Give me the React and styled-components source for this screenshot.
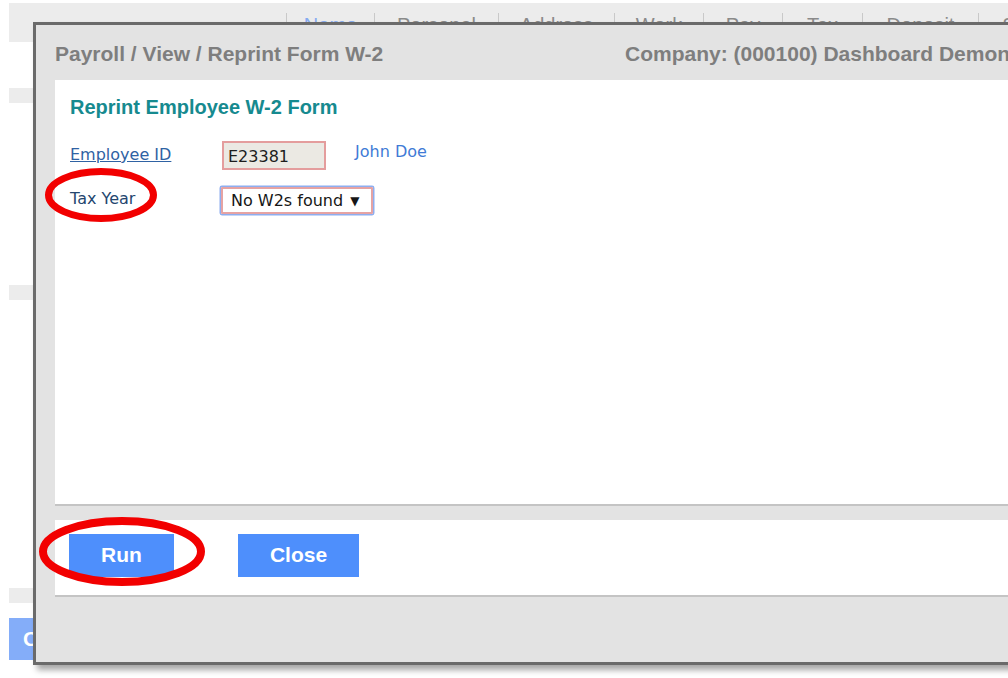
import React from "react";
import styled, { createGlobalStyle } from "styled-components";

const GlobalStyle = createGlobalStyle`
  html, body {
    margin: 0;
    padding: 0;
    background: #fff;
  }
  body {
    overflow: hidden;
    font-family: "Liberation Sans", Arial, sans-serif;
  }
`;

const tabs = [
  { label: "Name", width: 88, active: true },
  { label: "Personal", width: 124 },
  { label: "Address", width: 116 },
  { label: "Work", width: 89 },
  { label: "Pay", width: 79 },
  { label: "Tax", width: 80 },
  { label: "Deposit", width: 116 },
  { label: "Settings", width: 120 },
];

const App = () => {
  return (
    <>
      <GlobalStyle />
      <Screen>
        <Backdrop>
          <TabBar>
            {tabs.map((tab) => (
              <Tab key={tab.label} $w={tab.width} $active={tab.active}>
                {tab.label}
              </Tab>
            ))}
          </TabBar>
          <SideStrip $top={46} />
          <SideStrip $top={182} />
          <SideStrip $top={288} />
          <PageButton>Cancel</PageButton>
        </Backdrop>

        <Modal>
          <TitleBar>
            <Crumbs>Payroll / View / Reprint Form W-2</Crumbs>
            <Crumbs>Company: (000100) Dashboard Demonstration</Crumbs>
          </TitleBar>

          <Panel>
            <Heading>Reprint Employee W-2 Form</Heading>
            <FieldRow>
              <FieldLabel as="a" href="#" $pad={5} $link>
                Employee ID
              </FieldLabel>
              <TextBox>E23381</TextBox>
              <EmployeeName>John Doe</EmployeeName>
            </FieldRow>
            <FieldRow $gap={17}>
              <FieldLabel $pad={3}>Tax Year</FieldLabel>
              <SelectBox>
                No W2s found
                <Caret>▼</Caret>
              </SelectBox>
            </FieldRow>
          </Panel>

          <Footer>
            <ActionButton $w={105}>Run</ActionButton>
            <ActionButton $w={121}>Close</ActionButton>
          </Footer>
        </Modal>

        <Marks viewBox="0 0 1008 678">
          <ellipse cx="101" cy="195" rx="52.5" ry="23.5" />
          <ellipse cx="122" cy="551.5" rx="79" ry="30.5" strokeWidth="8" />
        </Marks>
      </Screen>
    </>
  );
};

export default App;

const Screen = styled.div`
  position: relative;
  width: 1008px;
  height: 678px;
  overflow: hidden;
  background: #fff;
`;

const Backdrop = styled.div`
  padding: 3px 0 0 9px;
`;

const TabBar = styled.div`
  height: 39px;
  background: #ececec;
  display: flex;
  padding-left: 277px;
`;

const Tab = styled.div`
  flex: none;
  box-sizing: border-box;
  width: ${(p) => p.$w}px;
  height: 26px;
  margin-top: 10px;
  border-left: 1px solid #c9c9c9;
  text-align: center;
  font-size: 20px;
  line-height: 24px;
  color: ${(p) => (p.$active ? "#86abf0" : "#8a8a8a")};
`;

const SideStrip = styled.div`
  width: 40px;
  height: 15px;
  margin-top: ${(p) => p.$top}px;
  background: #ececec;
`;

const PageButton = styled.div`
  width: 80px;
  height: 42px;
  margin-top: 15px;
  box-sizing: border-box;
  padding-left: 14px;
  background: #84adf9;
  color: #fff;
  font-size: 21px;
  font-weight: bold;
  line-height: 42px;
`;

const Modal = styled.div`
  position: absolute;
  left: 33px;
  top: 22px;
  width: 1060px;
  height: 643px;
  box-sizing: border-box;
  border: 3px solid #6a6a6a;
  background: #e3e3e3;
  box-shadow: 4px 5px 6px rgba(0, 0, 0, 0.35);
  padding-left: 19px;
  display: flex;
  flex-direction: column;
`;

const TitleBar = styled.div`
  height: 55px;
  box-sizing: border-box;
  padding-top: 17px;
  display: grid;
  grid-template-columns: 570px 1fr;
`;

const Crumbs = styled.div`
  font-size: 21px;
  font-weight: bold;
  line-height: 24px;
  color: #7e7e7e;
  white-space: nowrap;
`;

const Panel = styled.div`
  height: 426px;
  box-sizing: border-box;
  padding: 15px 0 0 15px;
  background: #fff;
  border-bottom: 2px solid #c4c4c4;
`;

const Heading = styled.div`
  font-size: 20px;
  font-weight: bold;
  line-height: 24px;
  color: #168a8f;
  margin-bottom: 22px;
`;

const FieldRow = styled.div`
  display: flex;
  align-items: flex-start;
  margin-top: ${(p) => p.$gap || 0}px;
  font-family: "DejaVu Sans", Verdana, sans-serif;
  font-size: 16px;
  line-height: 18px;
`;

const FieldLabel = styled.div`
  width: 152px;
  flex: none;
  padding-top: ${(p) => p.$pad}px;
  color: ${(p) => (p.$link ? "#2f62a3" : "#24466f")};
  text-decoration: ${(p) => (p.$link ? "underline" : "none")};
`;

const TextBox = styled.div`
  width: 104px;
  height: 29px;
  box-sizing: border-box;
  padding: 5px 4px 0;
  border: 2px solid #e49d9d;
  background: #ebe9e3;
  color: #1d1d1d;
`;

const EmployeeName = styled.div`
  margin-left: 29px;
  padding-top: 2px;
  color: #3f7bd6;
`;

const SelectBox = styled.div`
  display: flex;
  align-items: center;
  height: 27px;
  box-sizing: border-box;
  padding: 3px 12px 2px 8px;
  margin-left: -1px;
  border: 2px solid #e6a3a3;
  box-shadow: 0 0 0 1.5px #8eaef0;
  border-radius: 1px;
  color: #161616;
  white-space: nowrap;
`;

const Caret = styled.span`
  margin-left: 7px;
  font-size: 12px;
`;

const Footer = styled.div`
  margin-top: 14px;
  height: 77px;
  box-sizing: border-box;
  padding: 14px 0 0 14px;
  display: flex;
  align-items: flex-start;
  gap: 64px;
  background: #fff;
  border-bottom: 2px solid #c4c4c4;
`;

const ActionButton = styled.button`
  width: ${(p) => p.$w}px;
  height: 43px;
  border: none;
  padding: 0 0 2px;
  background: #4e8ffc;
  color: #fff;
  font-family: "Liberation Sans", Arial, sans-serif;
  font-size: 21px;
  font-weight: bold;
`;

const Marks = styled.svg`
  position: absolute;
  left: 0;
  top: 0;
  width: 1008px;
  height: 678px;
  pointer-events: none;
  fill: none;
  stroke: #f20000;
  stroke-width: 7px;
`;
